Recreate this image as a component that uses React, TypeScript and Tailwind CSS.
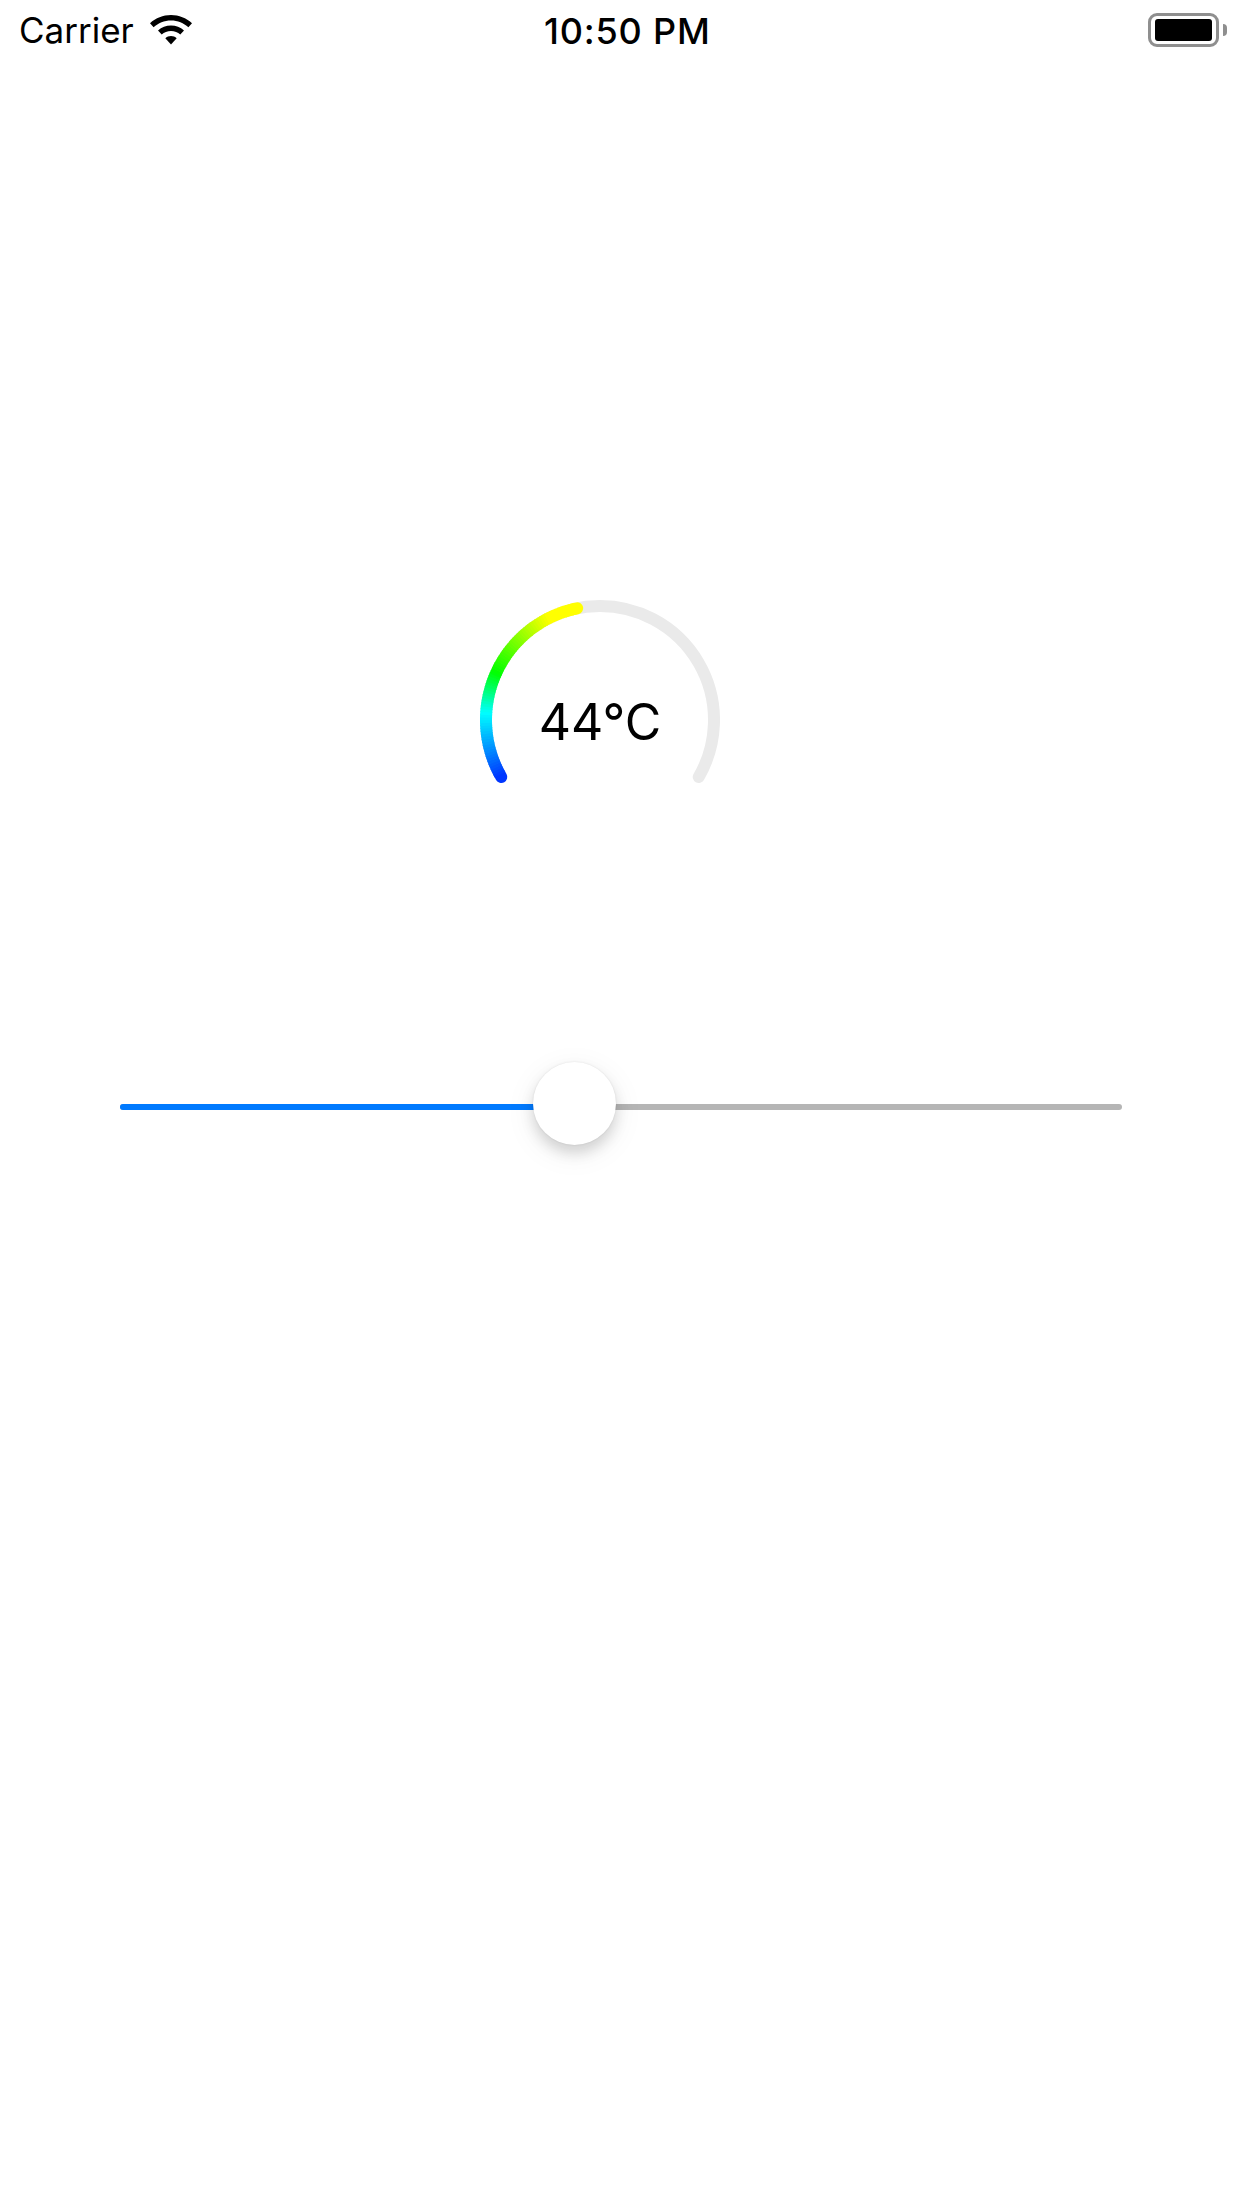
import { useMemo } from "react";

const cx = 120;
const cy = 120;
const r = 114;

function point(deg: number) {
  const a = (deg * Math.PI) / 180;
  return [cx + r * Math.cos(a), cy + r * Math.sin(a)];
}

function arc(from: number, to: number) {
  const [x1, y1] = point(from);
  const [x2, y2] = point(to);
  const large = to - from > 180 ? 1 : 0;
  return `M ${x1} ${y1} A ${r} ${r} 0 ${large} 1 ${x2} ${y2}`;
}

const stops = [
  { at: 0, c: [0, 50, 255] },
  { at: 0.31, c: [0, 255, 255] },
  { at: 0.5, c: [0, 255, 0] },
  { at: 0.86, c: [255, 255, 0] },
  { at: 1, c: [255, 255, 0] },
];

function colorAt(t: number) {
  for (let i = 1; i < stops.length; i++) {
    if (t <= stops[i].at) {
      const a = stops[i - 1];
      const b = stops[i];
      const k = (t - a.at) / (b.at - a.at);
      const c = a.c.map((v, j) => Math.round(v + (b.c[j] - v) * k));
      return `rgb(${c[0]},${c[1]},${c[2]})`;
    }
  }
  return "rgb(255,255,0)";
}

function Gauge() {
  const start = 150;
  const end = 390;
  const valueEnd = start + 240 * 0.452;

  const segments = useMemo(() => {
    const n = 80;
    return Array.from({ length: n }, (_, i) => {
      const a = start + ((valueEnd - start) * i) / n;
      const b = start + ((valueEnd - start) * (i + 1)) / n;
      return { d: arc(a, Math.min(b + 0.4, valueEnd)), color: colorAt((i + 0.5) / n), cap: i === 0 || i === n - 1 };
    });
  }, [valueEnd]);

  return (
    <div className="relative h-[240px] w-[240px]">
      <svg width="240" height="240" viewBox="0 0 240 240" fill="none" className="block">
        <path d={arc(start, end)} stroke="#eaeaea" strokeWidth="12" strokeLinecap="round" />
        {segments.map((s, i) => (
          <path key={i} d={s.d} stroke={s.color} strokeWidth="12" strokeLinecap={s.cap ? "round" : "butt"} />
        ))}
      </svg>
      <div className="absolute inset-0 flex items-center justify-center pt-[4px] font-['Inter',sans-serif] text-[50px] leading-none text-black">
        44°C
      </div>
    </div>
  );
}

function Wifi() {
  return (
    <svg width="42" height="30" viewBox="0 0 42 30" fill="black" className="block">
      <path d="M21 0C13 0 5.800 3 0 8.200L3.600 12.300C8.300 8 14.300 5.500 21 5.500C27.700 5.500 33.700 8 38.400 12.300L42 8.200C36.200 3 29 0 21 0Z" />
      <path d="M21 10.500C16.100 10.500 11.600 12.300 8 15.500L11.700 19.600C14.200 17.400 17.400 16 21 16C24.600 16 27.800 17.400 30.300 19.600L34 15.500C30.400 12.300 25.900 10.500 21 10.500Z" />
      <path d="M21 21C18.900 21 16.800 21.800 15.300 23.200L21 29.500L26.700 23.200C25.200 21.800 23.100 21 21 21Z" />
    </svg>
  );
}

function Battery() {
  return (
    <div className="flex items-center gap-[4px]">
      <div className="flex h-[34px] w-[71px] rounded-[9px] border-[3px] border-[#8f8f8f] px-[4px] py-[3px]">
        <div className="h-full w-full rounded-[3px] bg-black" />
      </div>
      <div className="h-[12px] w-[4px] rounded-r-full bg-[#8f8f8f]" />
    </div>
  );
}

export default function App() {
  return (
    <div className="flex h-[2208px] w-[1242px] flex-col bg-white font-['Inter',sans-serif] text-black">
      <div className="relative flex h-[60px] items-center justify-between pl-[19px] pr-[15px]">
        <div className="flex items-center gap-[16px]">
          <span className="text-[35px] leading-none">Carrier</span>
          <Wifi />
        </div>
        <span className="absolute left-[544px] top-[13px] text-[36px] font-medium leading-none tracking-[0.8px]">10:50 PM</span>
        <Battery />
      </div>

      <div className="ml-[480px] mt-[540px]">
        <Gauge />
      </div>

      <div className="relative mx-[120px] mt-[264px] h-[6px] rounded-full bg-[#b5b5b5]">
        <div className="h-full w-[420px] rounded-l-full bg-[#007aff]" />
        <div className="absolute left-[413px] top-[-42px] h-[83px] w-[83px] rounded-full bg-white shadow-[0_0_2px_rgba(0,0,0,0.1),0_8px_14px_rgba(0,0,0,0.14),0_8px_32px_rgba(0,0,0,0.07)]" />
      </div>
    </div>
  );
}
